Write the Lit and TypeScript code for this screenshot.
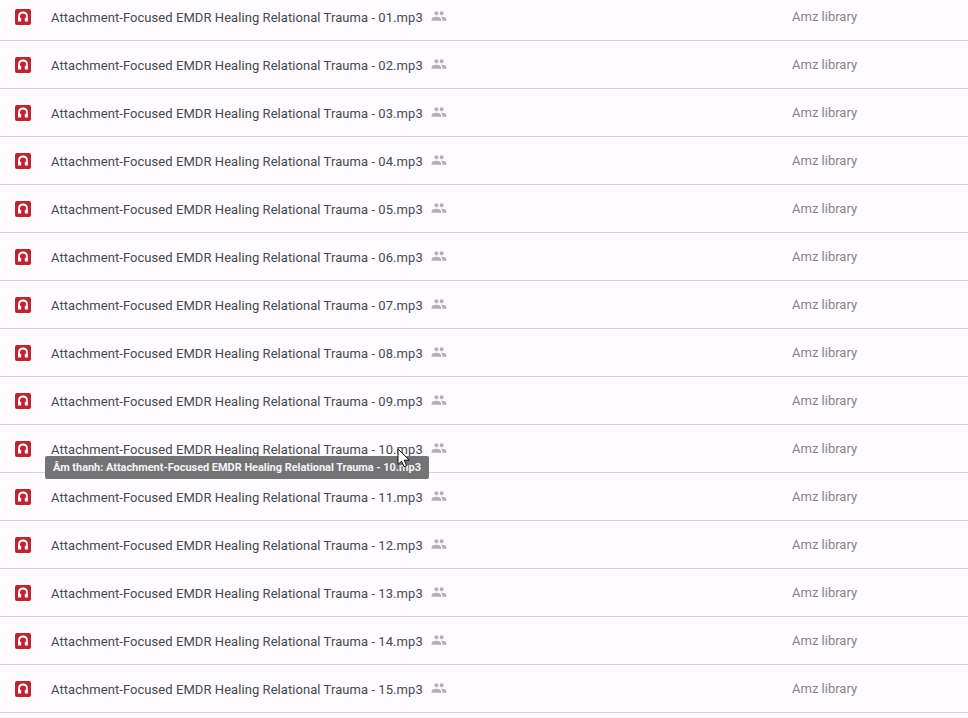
import { LitElement, html, css, svg } from "lit";
import { customElement } from "lit/decorators.js";

const BASE = "Attachment-Focused EMDR Healing Relational Trauma - ";
const files = Array.from({ length: 15 }, (_, i) => `${BASE}${String(i + 1).padStart(2, "0")}.mp3`);

@customElement("app-root")
export class AppRoot extends LitElement {
  static styles = css`
    :host {
      display: block;
      position: relative;
      width: 968px;
      height: 718px;
      overflow: hidden;
      background: #fdfbfe;
      font-family: Roboto, "Liberation Sans", sans-serif;
    }
    .list {
      margin-top: -7px;
    }
    .row {
      display: flex;
      align-items: center;
      height: 47px;
      border-bottom: 1px solid #d5d5d8;
      box-sizing: content-box;
    }
    .icon {
      width: 16px;
      height: 16px;
      margin-left: 15px;
      margin-top: 1px;
      flex: none;
    }
    .name {
      margin-left: 20px;
      margin-top: 2px;
      font-size: 13px;
      letter-spacing: 0.062px;
      color: #46484c;
      white-space: nowrap;
    }
    .shared {
      width: 16px;
      height: 16px;
      margin-left: 8px;
      margin-top: -1px;
      flex: none;
      fill: #b1b1b3;
    }
    .owner {
      margin-left: auto;
      width: 176px;
      font-size: 13px;
      color: #85858a;
      white-space: nowrap;
    }
    .tooltip {
      position: absolute;
      left: 45px;
      top: 456px;
      width: 384px;
      height: 23px;
      box-sizing: border-box;
      padding-left: 8px;
      display: flex;
      align-items: center;
      background: #737274;
      border-radius: 2px;
      color: #f4f4f4;
      font-size: 11px;
      font-weight: 700;
      letter-spacing: -0.045px;
      white-space: nowrap;
    }
    .cursor {
      position: absolute;
      left: 397px;
      top: 448px;
      width: 13px;
      height: 21px;
    }
  `;

  private headphones() {
    return svg`<svg class="icon" viewBox="0 0 16 16">
      <rect width="16" height="16" rx="2" fill="#c5202f"></rect>
      <path d="M4 11V7.4a4 4 0 0 1 8 0V11" fill="none" stroke="#fff" stroke-width="2"></path>
      <rect x="3" y="8.8" width="3.2" height="3.8" rx=".6" fill="#fff"></rect>
      <rect x="9.8" y="8.8" width="3.2" height="3.8" rx=".6" fill="#fff"></rect>
    </svg>`;
  }

  private people() {
    return svg`<svg class="shared" viewBox="0 0 24 24">
      <path d="M16 11c1.66 0 2.99-1.34 2.99-3S17.66 5 16 5s-3 1.34-3 3 1.34 3 3 3zm-8 0c1.66 0 2.99-1.34 2.99-3S9.66 5 8 5 5 6.34 5 8s1.34 3 3 3zm0 2c-2.33 0-7 1.17-7 3.5V19h14v-2.5C15 14.17 10.33 13 8 13zm8 0c-.29 0-.62.02-.97.05 1.16.84 1.97 1.97 1.97 3.45V19h6v-2.5c0-2.33-4.67-3.5-7-3.5z"></path>
    </svg>`;
  }

  render() {
    return html`
      <div class="list">
        ${files.map(
          (f) => html`<div class="row">
            ${this.headphones()}
            <span class="name">${f}</span>
            ${this.people()}
            <span class="owner">Amz library</span>
          </div>`
        )}
      </div>
      <div class="tooltip">Âm thanh: ${files[9]}</div>
      <svg class="cursor" viewBox="0 0 13 21">
        <path d="M1 1v15.5l3.6-3.4 2.4 5.7 2.6-1.1-2.4-5.6h5z" fill="#fff" stroke="#111" stroke-width="1"></path>
      </svg>
    `;
  }
}
